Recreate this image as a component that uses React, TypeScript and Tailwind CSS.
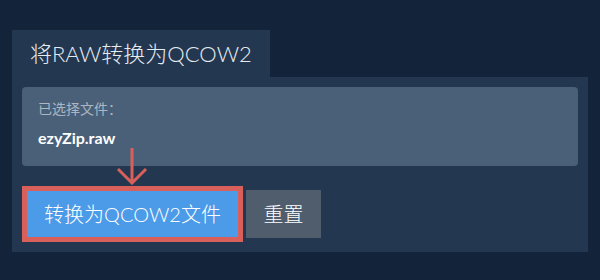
import React from "react";

export default function App() {
  const font = { fontFamily: 'Lato, "Noto Sans CJK SC", sans-serif' };
  return (
    <div className="w-[600px] h-[280px] bg-[#12233a] pt-[30px] pl-[12px]" style={font}>
      <div className="w-[576px]">
        <div className="inline-flex h-[47px] items-center bg-[#233750] pl-[18px] pr-[18px] text-[22px] font-light text-[#e6ebf0]">
          将RAW转换为QCOW2
        </div>
        <div className="bg-[#233750] px-[10px] pt-[10px] h-[175px]">
          <div className="h-[79px] rounded-[4px] bg-[#4a6078] px-[16px] pt-[12px]">
            <div className="text-[14px] leading-[20px] text-[#aab6c3]">已选择文件：</div>
            <div className="mt-[9px] text-[16px] font-bold leading-[20px] text-white">ezyZip.raw</div>
          </div>
          <div className="relative mt-[20px] flex items-start gap-[3px]">
            <svg className="absolute left-[94px] top-[-39px]" width="32" height="38" viewBox="0 0 32 38">
              <path d="M16 1 V36 M2 22 L16 36 L30 22" fill="none" stroke="#d9605a" strokeWidth="3" />
            </svg>
            <button className="h-[56px] w-[221px] border-[5px] border-[#d9605a] bg-[#4c9be8] text-[20px] font-light text-white">
              转换为QCOW2文件
            </button>
            <button className="mt-[4px] h-[48px] w-[75px] bg-[#4f5d6d] text-[20px] font-light text-white">重置</button>
          </div>
        </div>
      </div>
    </div>
  );
}
